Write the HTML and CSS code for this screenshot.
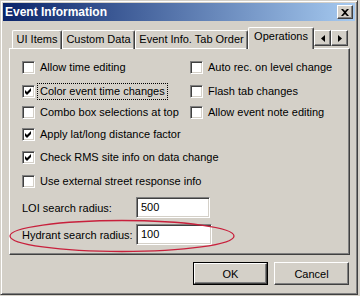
FILE: index.html
```html
<!DOCTYPE html>
<html lang="en">
<head>
  <meta charset="UTF-8" />
  <title>Event Information</title>
  <link rel="stylesheet" href="styles.css">
</head>
<body>

<div class="window">
  <div class="titlebar">
    <span class="title">Event Information</span>
    <span class="close">
      <svg width="8" height="7" viewBox="0 0 8 7"><path d="M0 0h2l2 2 2-2h2L5 3.5 8 7H6L4 5 2 7H0l3-3.5z" fill="#000"/></svg>
    </span>
  </div>

  <div class="content">
    <div class="tabs">
      <div class="tab w-ui">UI Items</div>
      <div class="tab w-custom">Custom Data</div>
      <div class="tab w-order">Event Info. Tab Order</div>
      <div class="tab active w-ops">Operations</div>
      <div class="scroller">
        <span class="arrow"><svg width="4" height="7" viewBox="0 0 4 7"><path d="M4 0v7L0 3.5z" fill="#000"/></svg></span>
        <span class="arrow"><svg width="4" height="7" viewBox="0 0 4 7"><path d="M0 0v7l4-3.5z" fill="#000"/></svg></span>
      </div>
    </div>

    <div class="panel">
      <div class="options">
        <div class="check"><span class="box"></span><span class="label">Allow time editing</span></div>
        <div class="check"><span class="box"></span><span class="label">Auto rec. on level change</span></div>

        <div class="check"><span class="box checked"><svg width="7" height="7" viewBox="0 0 7 7"><path d="M0 2l2 2 4-4v3L2 7 0 5z" fill="#000"/></svg></span><span class="label focus">Color event time changes</span></div>
        <div class="check"><span class="box"></span><span class="label">Flash tab changes</span></div>

        <div class="check"><span class="box"></span><span class="label">Combo box selections at top</span></div>
        <div class="check"><span class="box"></span><span class="label">Allow event note editing</span></div>

        <div class="check wide"><span class="box checked"><svg width="7" height="7" viewBox="0 0 7 7"><path d="M0 2l2 2 4-4v3L2 7 0 5z" fill="#000"/></svg></span><span class="label">Apply lat/long distance factor</span></div>

        <div class="check wide"><span class="box checked"><svg width="7" height="7" viewBox="0 0 7 7"><path d="M0 2l2 2 4-4v3L2 7 0 5z" fill="#000"/></svg></span><span class="label">Check RMS site info on data change</span></div>

        <div class="check wide"><span class="box"></span><span class="label">Use external street response info</span></div>
      </div>

      <div class="field">
        <span class="field-label">LOI search radius:</span>
        <span class="input">500</span>
      </div>
      <div class="field second">
        <span class="field-label">Hydrant search radius:</span>
        <span class="input wider">100</span>
      </div>
    </div>

    <div class="buttons">
      <span class="btn default"><span class="btn-inner">OK</span></span>
      <span class="btn"><span class="btn-inner">Cancel</span></span>
    </div>
  </div>

  <!-- hand-drawn highlight around the hydrant field -->
  <svg class="mark" width="358" height="295" viewBox="0 0 358 295">
    <ellipse cx="122" cy="236" rx="112" ry="15.5" fill="none" stroke="#c8203c" stroke-width="1.3"/>
  </svg>
</div>

</body>
</html>
```

FILE: styles.css
```css
* { box-sizing: border-box; }
body {
  margin: 0;
  background: #d4d0c8;
  font-family: 'Liberation Sans', Arial, sans-serif;
  font-size: 11px;
  color: #000;
}
.window {
  position: relative;
  width: 358px;
  height: 295px;
  padding: 2px;
  background: #d4d0c8;
  border: 1px solid;
  border-color: #d4d0c8 #404040 #404040 #d4d0c8;
  box-shadow: inset 1px 1px #fff, inset -1px -1px #808080;
}
.titlebar {
  height: 18px;
  display: flex;
  align-items: center;
  justify-content: space-between;
  padding: 0 2px 0 2px;
  background: linear-gradient(to right, #0a246a, #a6caf0);
  color: #fff;
}
.title { font-weight: bold; font-size: 12px; }
.close {
  width: 16px;
  height: 14px;
  display: flex;
  align-items: center;
  justify-content: center;
  background: #d4d0c8;
  border: 1px solid;
  border-color: #fff #404040 #404040 #fff;
  box-shadow: inset -1px -1px #808080;
}
.content { padding: 7px 5px 0 6px; }
.tabs {
  display: flex;
  align-items: flex-end;
  height: 21px;
  padding-left: 3px;
  margin-bottom: -1px;
}
.tab {
  height: 19px;
  padding-top: 2px;
  text-align: center;
  border: 1px solid;
  border-bottom: none;
  border-color: #fff #404040 #404040 #fff;
  border-radius: 2px 2px 0 0;
  box-shadow: inset -1px 0 #808080;
}
.tab.active {
  position: relative;
  z-index: 1;
  height: 22px;
  padding-top: 2px;
  background: #d4d0c8;
}
.w-ui { width: 50px; }
.w-custom { width: 73px; }
.w-order { width: 113px; }
.w-ops { width: 66px; }
.scroller {
  align-self: flex-start;
  margin-top: 2px;
  display: flex;
}
.arrow {
  width: 17px;
  height: 16px;
  display: flex;
  align-items: center;
  justify-content: center;
  border: 1px solid;
  border-color: #fff #404040 #404040 #fff;
  box-shadow: inset -1px -1px #808080;
}
.panel {
  width: 341px;
  height: 207px;
  padding: 12px 0 0 12px;
  border: 1px solid;
  border-color: #fff #404040 #404040 #fff;
  box-shadow: inset -1px -1px #808080;
}
.options {
  display: grid;
  grid-template-columns: 168px 1fr;
  grid-template-rows: 24px 21px 22px 23px 24px 22px;
}
.check {
  display: flex;
  align-items: center;
  height: 13px;
}
.check.wide { grid-column: 1 / 3; }
.box {
  width: 13px;
  height: 13px;
  flex: none;
  display: flex;
  align-items: center;
  justify-content: center;
  background: #fff;
  border: 1px solid;
  border-color: #808080 #fff #fff #808080;
  box-shadow: inset 1px 1px #404040, inset -1px -1px #d4d0c8;
}
.label {
  margin-left: 3px;
  padding: 1px 2px 2px 2px;
  white-space: nowrap;
}
.label.focus { outline: 1px dotted #000; outline-offset: 0; }
.field {
  display: flex;
  align-items: center;
}
.field.second { margin-top: 6px; }
.field-label { width: 114px; }
.input {
  width: 74px;
  height: 21px;
  padding: 3px 0 0 4px;
  background: #fff;
  border: 1px solid;
  border-color: #808080 #fff #fff #808080;
  box-shadow: inset 1px 1px #404040, inset -1px -1px #d4d0c8;
}
.input.wider { width: 76px; }
.buttons {
  display: flex;
  justify-content: flex-end;
  gap: 6px;
  margin-top: 7px;
  padding-right: 1px;
}
.btn {
  width: 75px;
  height: 23px;
  display: flex;
  border: 1px solid;
  border-color: #fff #404040 #404040 #fff;
  box-shadow: inset -1px -1px #808080;
}
.btn-inner {
  flex: 1;
  display: flex;
  align-items: center;
  justify-content: center;
}
.btn.default {
  border-color: #000;
  box-shadow: none;
}
.btn.default .btn-inner {
  border: 1px solid;
  border-color: #fff #404040 #404040 #fff;
  box-shadow: inset -1px -1px #808080;
}
.mark {
  position: absolute;
  top: -1px;
  left: -1px;
  pointer-events: none;
}
```
